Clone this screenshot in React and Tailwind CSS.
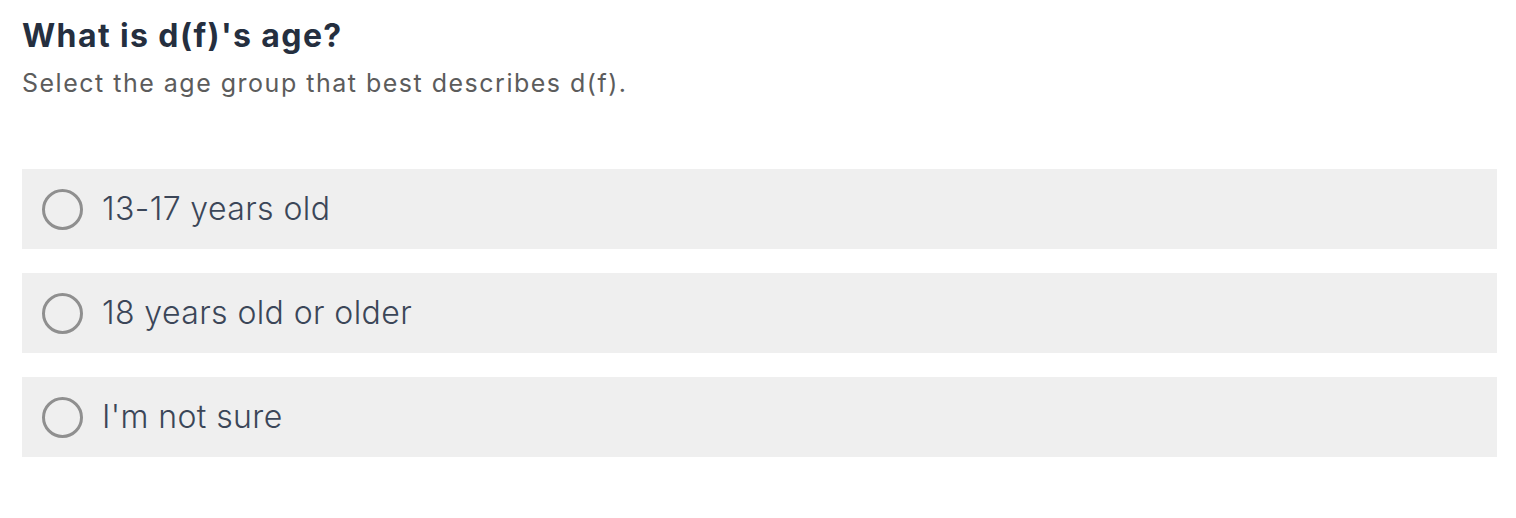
const options = ["13-17 years old", "18 years old or older", "I'm not sure"];

const App = () => {
  return (
    <div
      className="min-h-screen bg-white pl-[22px] pr-[19px] pt-[18px]"
      style={{ fontFamily: "Inter, 'Noto Sans', sans-serif" }}
    >
      <h1 className="text-[32px] font-bold leading-[36px] tracking-[1.4px] text-[#252f3f]">
        What is d(f)'s age?
      </h1>
      <p className="mt-[13px] text-[25px] leading-[32px] tracking-[1.5px] text-[#5c5c5c]">
        Select the age group that best describes d(f).
      </p>
      <div className="mt-[70px] flex flex-col gap-[24px]">
        {options.map((opt) => (
          <label
            key={opt}
            className="flex h-[80px] cursor-pointer items-center gap-[19px] bg-[#efefef] pl-[20px]"
          >
            <span className="h-[41px] w-[41px] shrink-0 rounded-full border-[3px] border-[#8f8f8f]" />
            <span className="text-[32px] font-light leading-none tracking-[0.4px] text-[#3b4658]">
              {opt}
            </span>
          </label>
        ))}
      </div>
    </div>
  );
};

export default App;
